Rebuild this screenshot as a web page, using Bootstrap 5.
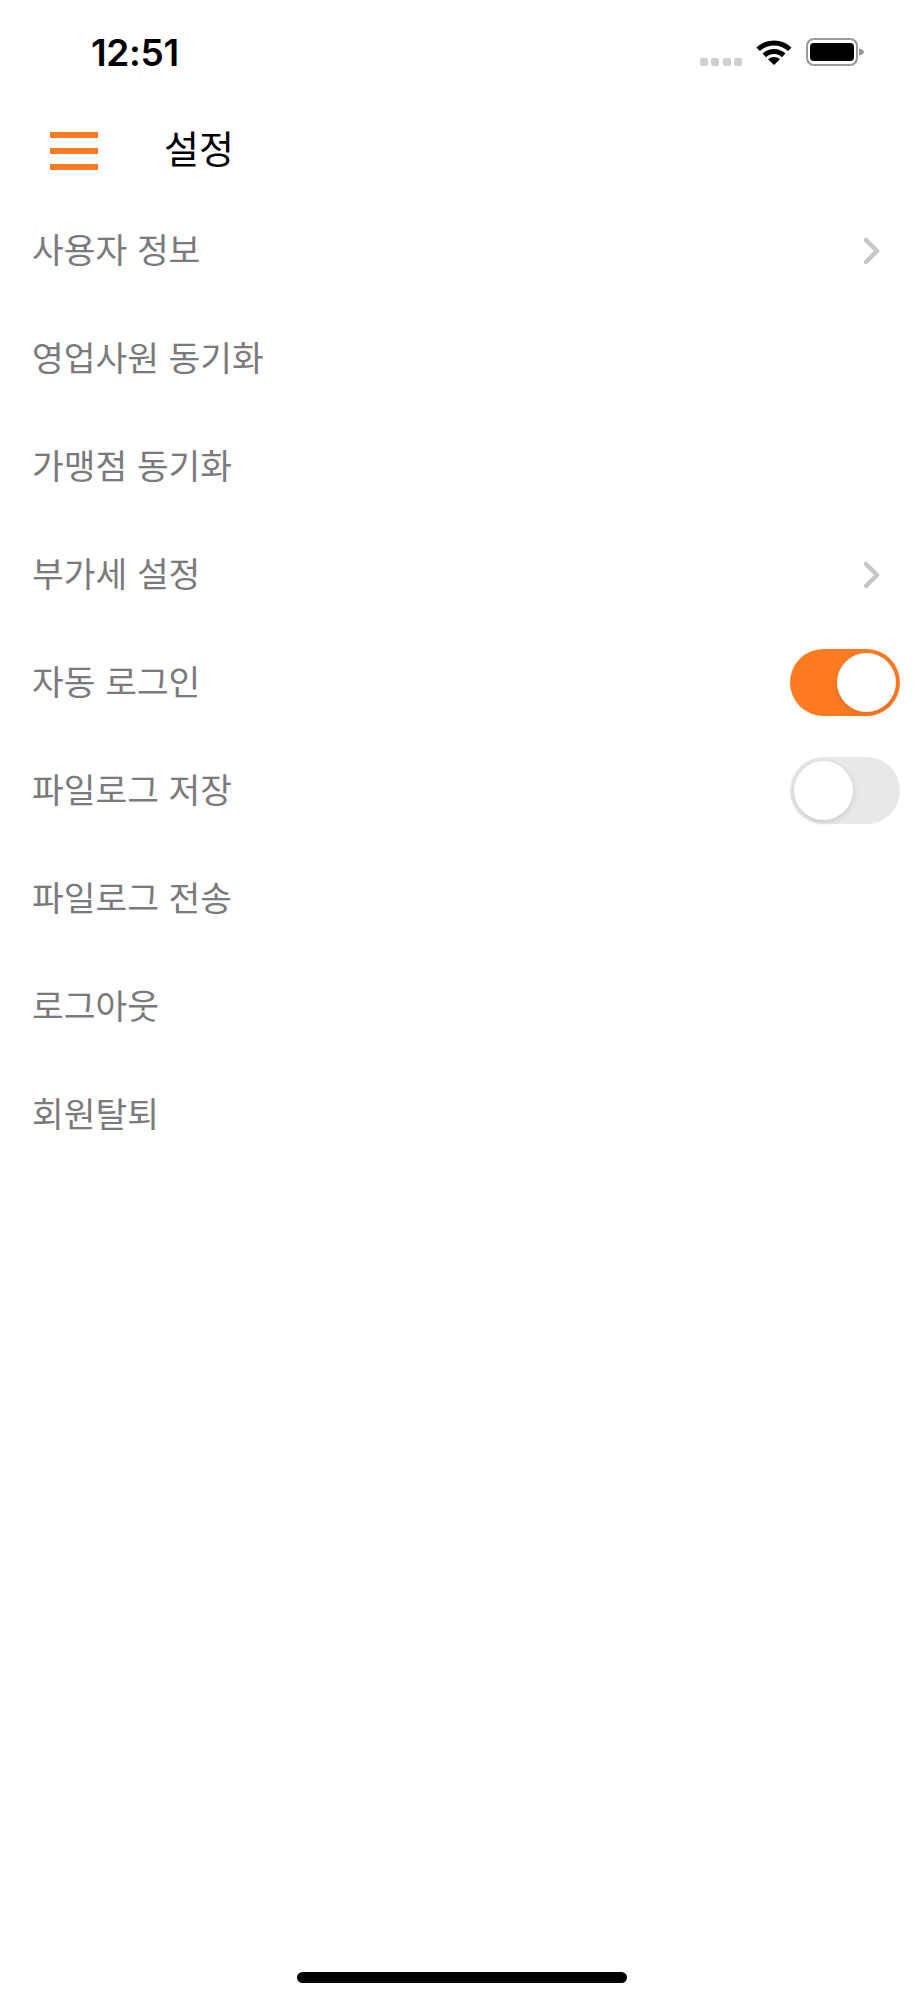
<!DOCTYPE html>
<html lang="ko">
<head>
    <meta charset="UTF-8">
    <meta name="viewport" content="width=device-width, initial-scale=1.0">
    <title>설정</title>
    <link href="https://cdn.jsdelivr.net/npm/bootstrap@5.3.0/dist/css/bootstrap.min.css" rel="stylesheet">
    <style>
        body { font-family: "Noto Sans CJK KR", "Liberation Sans", sans-serif; background: #fff; }
        .phone-screen { height: 2000px; }
        .status-bar { height: 100px; padding: 3px 60px 0 91px; }
        .status-time { font-family: Inter, "Liberation Sans", sans-serif; font-size: 37px; font-weight: 600; line-height: 1; letter-spacing: -.3px; margin-top: 2px; color: #000; }
        .signal-dot { width: 8px; height: 8px; border-radius: 2px; background: #cfcfcf; }
        .signal-dots { gap: 3.5px; margin: 20px 14px 0 0; }
        .wifi-icon { width: 36px; height: 26px; margin: 0 14px 0 0; }
        .battery-icon { width: 58px; height: 28px; }
        .app-header { height: 96px; padding-left: 50px; }
        .menu-icon { width: 48px; gap: 10px; margin: 6px 66px 0 0; }
        .menu-bar { height: 6px; background: #ff7b22; }
        .app-title { font-size: 38px; line-height: 1; color: #000; margin: 0 0 3px; font-weight: 400; }
        .setting-row { height: 108px; padding: 0 24px 2px 32px; border: 0; font-size: 34.5px; color: #7a7a7d; }
        .row-chevron { width: 18px; height: 28px; margin: 4px 19px 0 0; }
        .toggle-track { width: 110px; height: 67px; border-radius: 34px; position: relative; margin-top: 2px; }
        .toggle-on { background: #ff7b22; }
        .toggle-off { background: #e8e8ea; }
        .toggle-thumb { position: absolute; top: 4px; width: 59px; height: 59px; border-radius: 50%; background: #fff; }
        .toggle-on .toggle-thumb { left: 47px; box-shadow: 0 3px 8px rgba(0,0,0,.1); }
        .toggle-off .toggle-thumb { left: 4px; box-shadow: 0 2px 6px rgba(0,0,0,.14); }
        .home-bar { width: 330px; height: 11px; border-radius: 6px; background: #000; bottom: 17px; left: 297px; }
    </style>
</head>
<body>
<div class="phone-screen position-relative">
    <div class="status-bar d-flex align-items-center">
        <div class="status-time me-auto">12:51</div>
        <div class="signal-dots d-flex">
            <span class="signal-dot"></span><span class="signal-dot"></span><span class="signal-dot"></span><span class="signal-dot"></span>
        </div>
        <svg class="wifi-icon" viewBox="0 0 36 26">
            <path d="M2.2 10.2A23 23 0 0 1 33.8 10.2" fill="none" stroke="#000" stroke-width="5"/>
            <path d="M8.3 16.4A14 14 0 0 1 27.7 16.4" fill="none" stroke="#000" stroke-width="5"/>
            <path d="M12 20.3Q18 15.7 24 20.3L18 26Z" fill="#000"/>
        </svg>
        <svg class="battery-icon" viewBox="0 0 58 28">
            <rect x="1" y="1" width="50" height="26" rx="7" fill="none" stroke="#9a9a9a" stroke-width="2"/>
            <rect x="4" y="5" width="44" height="18" rx="4" fill="#000"/>
            <path d="M53 10.5Q58 11.5 58 14T53 17.5Z" fill="#9a9a9a"/>
        </svg>
    </div>

    <div class="app-header d-flex align-items-center">
        <div class="menu-icon d-flex flex-column">
            <div class="menu-bar"></div>
            <div class="menu-bar"></div>
            <div class="menu-bar"></div>
        </div>
        <h1 class="app-title">설정</h1>
    </div>

    <div class="list-group list-group-flush">
        <div class="list-group-item setting-row d-flex align-items-center justify-content-between">
            <span>사용자 정보</span>
            <svg class="row-chevron" viewBox="0 0 18 28"><path d="M3 3L14 14L3 25" fill="none" stroke="#c6c6c8" stroke-width="4.5" stroke-linecap="round" stroke-linejoin="round"/></svg>
        </div>
        <div class="list-group-item setting-row d-flex align-items-center"><span>영업사원 동기화</span></div>
        <div class="list-group-item setting-row d-flex align-items-center"><span>가맹점 동기화</span></div>
        <div class="list-group-item setting-row d-flex align-items-center justify-content-between">
            <span>부가세 설정</span>
            <svg class="row-chevron" viewBox="0 0 18 28"><path d="M3 3L14 14L3 25" fill="none" stroke="#c6c6c8" stroke-width="4.5" stroke-linecap="round" stroke-linejoin="round"/></svg>
        </div>
        <div class="list-group-item setting-row d-flex align-items-center justify-content-between">
            <span>자동 로그인</span>
            <div class="toggle-track toggle-on"><div class="toggle-thumb"></div></div>
        </div>
        <div class="list-group-item setting-row d-flex align-items-center justify-content-between">
            <span>파일로그 저장</span>
            <div class="toggle-track toggle-off"><div class="toggle-thumb"></div></div>
        </div>
        <div class="list-group-item setting-row d-flex align-items-center"><span>파일로그 전송</span></div>
        <div class="list-group-item setting-row d-flex align-items-center"><span>로그아웃</span></div>
        <div class="list-group-item setting-row d-flex align-items-center"><span>회원탈퇴</span></div>
    </div>

    <div class="home-bar position-absolute"></div>
</div>
<script src="https://cdn.jsdelivr.net/npm/bootstrap@5.3.0/dist/js/bootstrap.bundle.min.js"></script>
</body>
</html>
